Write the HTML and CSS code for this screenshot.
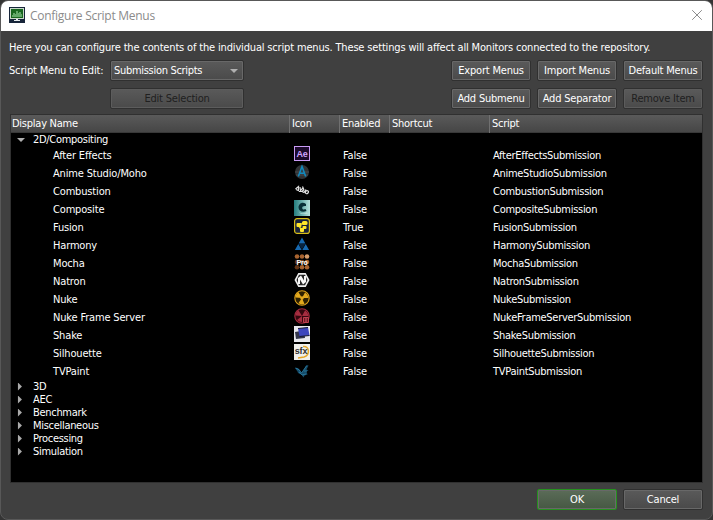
FILE: index.html
```html
<!DOCTYPE html>
<html lang="en">
<head>
<meta charset="utf-8">
<title>Configure Script Menus</title>
<link rel="stylesheet" href="styles.css">
</head>
<body>
<div class="window">
  <header class="titlebar">
    <svg class="app-icon" width="16" height="16" viewBox="0 0 16 16"><rect width="16" height="16" fill="#17253a"/><rect x="1.5" y="1.5" width="13" height="10" fill="#18671f" stroke="#c8d8c8"/><path d="M3 10V8h1V6h2v1h1V4h2v2h1V5h2v2h1v3z" fill="#62a868"/><path d="M7 12h2v1h2v1H5v-1h2z" fill="#e8eef0"/></svg>
    <h1 class="title">Configure Script Menus</h1>
    <svg class="close" width="10" height="10" viewBox="0 0 10 10"><path d="M.2.2l9.6 9.6M9.8.2L.2 9.8" stroke="#8c8c8c" fill="none"/></svg>
  </header>
  <main class="content">
    <p class="intro">Here you can configure the contents of the individual script menus. These settings will affect all Monitors connected to the repository.</p>
    <div class="controls">
      <span class="label">Script Menu to Edit:</span>
      <div class="btn combo"><span>Submission Scripts</span><i class="down"></i></div>
      <button class="btn first">Export Menus</button><button class="btn">Import Menus</button><button class="btn">Default Menus</button>
      <button class="btn off edit">Edit Selection</button>
      <button class="btn first">Add Submenu</button><button class="btn">Add Separator</button><button class="btn off">Remove Item</button>
    </div>
    <div class="tree">
      <div class="row head"><span>Display Name</span><span>Icon</span><span>Enabled</span><span>Shortcut</span><span>Script</span></div>
      <div class="group"><i class="down"></i><span>2D/Compositing</span></div>
      <div class="row item"><span>After Effects</span><span><svg viewBox="0 0 16 16"><rect x=".5" y=".5" width="15" height="14" fill="#1c0a2c" stroke="#c99bf5"/><text x="8" y="11" text-anchor="middle" class="ae">Ae</text></svg></span><span>False</span><span></span><span>AfterEffectsSubmission</span></div>
      <div class="row item"><span>Anime Studio/Moho</span><span><svg viewBox="0 0 16 16"><circle cx="8" cy="8" r="7" fill="#303234"/><path d="M1 8h14M2 11h12" stroke="#484b4d"/><path d="M4.3 12.5L8 2.5l3.7 10M5.5 9.3h5" fill="none" stroke="#1389bd" stroke-width="1.6"/></svg></span><span>False</span><span></span><span>AnimeStudioSubmission</span></div>
      <div class="row item"><span>Combustion</span><span><svg viewBox="0 0 16 16"><path d="M1.500 7l3-2.500v4L2 7.500M6 5l.5 3.500L9 6M8.500 4.500L10 8M5 9.500h3l2 1 2-3M11.500 9.500c2-2 4 0 2.500 1.500s-3 .5-2.500-1.500M8 9.500l2-2" fill="none" stroke="#dedede" stroke-width="1.2"/></svg></span><span>False</span><span></span><span>CombustionSubmission</span></div>
      <div class="row item"><span>Composite</span><span><svg viewBox="0 0 16 16"><defs><linearGradient id="teal"><stop stop-color="#247d7e"/><stop offset="1" stop-color="#b8e4df"/></linearGradient></defs><rect width="16" height="16" fill="url(#teal)"/><path d="M12 4C8 1 4.500 4 4.500 7.500s4 5.500 8 3.500l-1-2C7.500 11 6.500 5 12 6z" fill="#093038"/><path d="M5 12q4 3 8 0l1 2H7z" fill="#b7dcd8"/></svg></span><span>False</span><span></span><span>CompositeSubmission</span></div>
      <div class="row item"><span>Fusion</span><span><svg viewBox="0 0 16 16"><rect x=".6" y=".6" width="14.8" height="14.8" rx="2.5" fill="#17213a" stroke="#d7bd18" stroke-width="1.2"/><path d="M4 7l7-2M4 7l4 5 3-3" fill="none" stroke="#d8c81e" stroke-width="1.6"/><g fill="#ffe62a"><rect x="2.500" y="5" width="5" height="4" rx="1"/><rect x="8" y="3" width="5.500" height="4" rx="1.5"/><rect x="8.500" y="8" width="4" height="3" rx="1"/><rect x="6" y="10" width="4" height="4" rx="1"/></g></svg></span><span>True</span><span></span><span>FusionSubmission</span></div>
      <div class="row item"><span>Harmony</span><span><svg viewBox="0 0 16 16"><path d="M8 1.5l3.400 6H4.600zM4.300 8l3.400 6H.9zM11.700 8l3.400 6H8.300z" fill="#1769b0"/><path d="M4.700 8h6.600L8 13.500z" fill="#08243f"/></svg></span><span>False</span><span></span><span>HarmonySubmission</span></div>
      <div class="row item"><span>Mocha</span><span><svg viewBox="0 0 16 16"><g fill="#a8632f"><circle cx="3" cy="2.5" r="2.3"/><circle cx="8" cy="2.5" r="2.3"/><circle cx="13" cy="2.5" r="2.3" fill="#d69b69"/><circle cx="3" cy="8" r="2.3" fill="#572f18"/><circle cx="8" cy="8" r="2.3" fill="#70401d"/><circle cx="13" cy="8" r="2.3"/><circle cx="3" cy="13.2" r="2.3" fill="#643516"/><circle cx="8" cy="13.2" r="2.3"/><circle cx="13" cy="13.2" r="2.3"/></g><text x="8" y="10.7" text-anchor="middle" class="pro">Pro</text></svg></span><span>False</span><span></span><span>MochaSubmission</span></div>
      <div class="row item"><span>Natron</span><span><svg viewBox="0 0 16 16"><path d="M4.300 1h7.400L15.500 8l-3.800 7H4.300L.5 8z" fill="#ededed"/><path d="M5 2.800h6L13.500 8 11 13.200H5L2.500 8z" fill="#252525"/><path d="M4 6l3-2.500 3 5V4h2v6l-3 2.500-3-5V12H4z" fill="#f8f8f8"/></svg></span><span>False</span><span></span><span>NatronSubmission</span></div>
      <div class="row item"><span>Nuke</span><span><svg viewBox="0 0 16 16"><circle cx="8" cy="8" r="7.200" fill="#2d2000" stroke="#dfa31b" stroke-width="1.1"/><path d="M8 8L1.500 7.500Q1.500 4 4.500 2.200zM8 8l3-5.500q3 1.500 3.500 5.500zM8 8l2.500 6q-4 1.200-6-1z" fill="#e3a91d"/><circle cx="8" cy="8" r="1.800" fill="#e3a91d"/></svg></span><span>False</span><span></span><span>NukeSubmission</span></div>
      <div class="row item"><span>Nuke Frame Server</span><span><svg viewBox="0 0 16 16"><circle cx="8" cy="8" r="7.200" fill="#34070e" stroke="#a52a3d" stroke-width="1.1"/><path d="M8 8L1.500 7.500Q1.500 4 4.500 2.200zM8 8l3-5.500q3 1.500 3.500 5.500zM8 8v6q-3 0-5-2z" fill="#a52d40"/><path d="M9.500 9.500h5v5h-5z" fill="#6f1723" stroke="#bf4050"/><path d="M12 10v4" stroke="#c75b69"/></svg></span><span>False</span><span></span><span>NukeFrameServerSubmission</span></div>
      <div class="row item"><span>Shake</span><span><svg viewBox="0 0 16 16"><rect width="16" height="16" fill="#e8e8ed"/><path d="M1 6l9-1.500 1 7.500-9 1z" fill="#33364b"/><path d="M4 2.500l10-1 1.500 8-10 1z" fill="#3c45bd"/><path d="M4 2.500l10-1M5.500 10.500l10-1" stroke="#171933" stroke-width="1.2"/></svg></span><span>False</span><span></span><span>ShakeSubmission</span></div>
      <div class="row item"><span>Silhouette</span><span><svg viewBox="0 0 16 16"><rect width="16" height="16" fill="#f0efeb"/><path d="M9 2.500c7-1 7 9 1 10.500L4 14" fill="none" stroke="#e5a628" stroke-width="1.5"/><text x="7" y="10" text-anchor="middle" class="sfx">sfx</text></svg></span><span>False</span><span></span><span>SilhouetteSubmission</span></div>
      <div class="row item"><span>TVPaint</span><span><svg viewBox="0 0 16 16"><path d="M1 6q4-1 6.500 5l5-8 2 .5-2 4 2 1-2 1 1 3-3 1-1 2-2-3q-4-1-4-3z" fill="#154c69"/><path d="M1.500 6q4 1 6 5l5-7M5 10l3 3 4-1M10 9h3" stroke="#2f7da3" fill="none" stroke-width=".8"/></svg></span><span>False</span><span></span><span>TVPaintSubmission</span></div>
      <div class="group"><i class="right"></i><span>3D</span></div>
      <div class="group"><i class="right"></i><span>AEC</span></div>
      <div class="group"><i class="right"></i><span>Benchmark</span></div>
      <div class="group"><i class="right"></i><span>Miscellaneous</span></div>
      <div class="group"><i class="right"></i><span>Processing</span></div>
      <div class="group"><i class="right"></i><span>Simulation</span></div>
    </div>
    <footer class="footer"><button class="btn ok">OK</button><button class="btn">Cancel</button></footer>
  </main>
</div>
</body>
</html>
```
FILE: styles.css
```css
* { box-sizing: border-box; }
body { margin: 0; background: #343434; }
.window { width: 713px; height: 520px; border: 1px solid #585858; border-radius: 8px; overflow: hidden; background: #404040; color: #fff; font: 11px/13px "DejaVu Sans Condensed", "DejaVu Sans", sans-serif; font-stretch: condensed; letter-spacing: -.165px; }
.titlebar { height: 30px; background: #fff; display: flex; align-items: center; padding: 0 10px 0 8px; }
.app-icon { margin-top: -2px; }
.title { flex: 1; margin: 0 0 0 5px; font: 12px/16px "Open Sans", sans-serif; letter-spacing: -.27px; color: #8b8b8b; }
.close { margin-top: -2px; }
.content { padding: 10px 9px 0 8px; }
.intro { margin: 0; height: 19px; white-space: nowrap; }
.controls { display: grid; grid-template-columns: 95px 134px 195px 80px 80px 80px; grid-template-rows: 21px 21px; gap: 7px 6px; height: 49px; }
.label { line-height: 22px; white-space: nowrap; }
.btn { height: 21px; min-width: 0; padding: 0; border: 1px solid #303030; border-radius: 2px; box-shadow: inset 0 0 0 1px #686868; background: linear-gradient(#5a5a5a, #4a4a4a); color: #fff; font: inherit; letter-spacing: -.2px; line-height: 17px; text-align: center; white-space: nowrap; }
.combo { display: flex; align-items: center; justify-content: space-between; padding: 0 5px 0 3px; letter-spacing: -.3px; }
.off { color: #202020; box-shadow: inset 0 0 0 1px #5c5c5c; }
.edit { grid-column: 2; letter-spacing: -.2px; }
.first { grid-column: 4; }
.tree { width: 693px; height: 369px; margin: 5px 0 0 1px; border: 1px solid #303030; background: #000; }
.row { display: grid; grid-template-columns: 278px 50px 50px 100px 213px; height: 18px; }
.head { background: linear-gradient(#5a5a5a, #464646); border-bottom: 1px solid #383838; line-height: 18px; letter-spacing: -.25px; }
.head span { padding-left: 2px; border-left: 1px solid #707070; }
.head span:first-child { padding-left: 1px; border: 0; }
.item { line-height: 20px; }
.item span { padding-left: 4px; }
.item span:first-child { padding-left: 42px; }
.item span:nth-child(2) { padding-left: 5px; }
.item span:last-child { letter-spacing: -.28px; }
.item svg { display: block; width: 16px; height: 16px; }
.group { display: flex; align-items: center; height: 13px; padding-left: 6px; letter-spacing: -.3px; }
.group i { margin-right: 8px; }
.down { width: 0; border: 4px solid transparent; border-top-color: #b0b0b0; border-bottom: 0; }
.right { width: 8px; height: 8px; background: #aaa; clip-path: polygon(12% 0, 62% 50%, 12% 100%); }
.footer { display: flex; justify-content: flex-end; gap: 6px; padding-top: 6px; }
.footer .btn { width: 80px; }
.footer .ok { border-color: #26901f; background: linear-gradient(#5b6c58, #465843); }
.ae { font: bold 9px "Liberation Sans", sans-serif; fill: #d1a5ff; }
.pro { font: bold 7px "Liberation Sans", sans-serif; fill: #fff; }
.sfx { font: bold 9px "Liberation Sans", sans-serif; fill: #303030; }
```
